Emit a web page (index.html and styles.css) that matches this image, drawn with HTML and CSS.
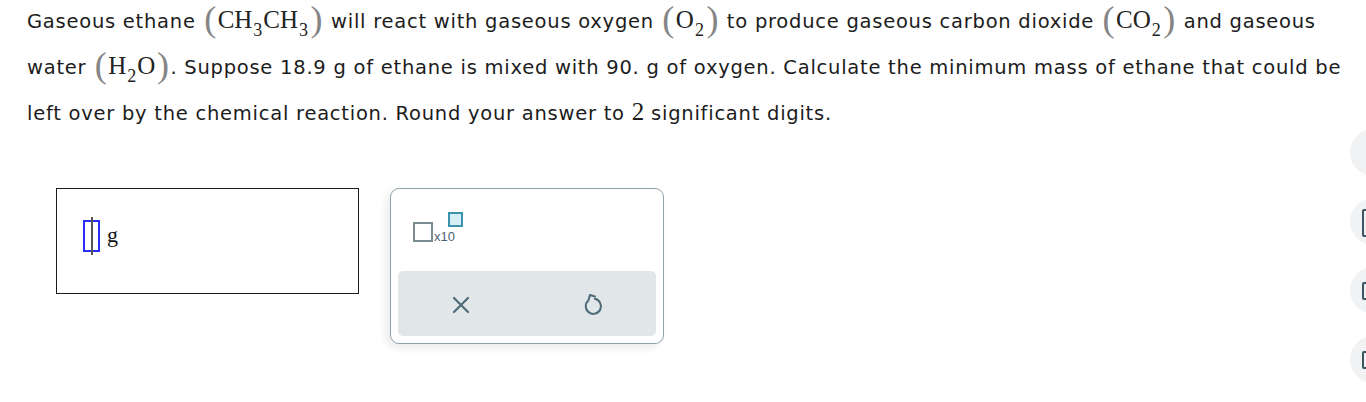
FILE: index.html
```html
<!DOCTYPE html>
<html>
<head>
<meta charset="utf-8">
<link rel="stylesheet" href="styles.css">
</head>
<body>
<div class="page">
  <p class="question">Gaseous ethane <span class="m"><span class="par">(</span>CH<sub>3</sub>CH<sub>3</sub><span class="par">)</span></span> will react with gaseous oxygen <span class="m"><span class="par">(</span>O<sub>2</sub><span class="par">)</span></span> to produce gaseous carbon dioxide <span class="m"><span class="par">(</span>CO<sub>2</sub><span class="par">)</span></span> and gaseous water <span class="m"><span class="par">(</span>H<sub>2</sub>O<span class="par">)</span></span>. Suppose 18.9 g of ethane is mixed with 90. g of oxygen. Calculate the minimum mass of ethane that could be left over by the chemical reaction. Round your answer to <span class="num">2</span> significant digits.</p>

  <div class="answer-row">
    <div class="answer-box">
      <span class="slot"><span class="beam"></span></span>
      <span class="unit">g</span>
    </div>
    <div class="panel">
      <div class="sci">
        <span class="sq"></span><span class="x10">x10</span><span class="exp"></span>
      </div>
      <div class="actions">
        <svg class="ico" width="20" height="20" viewBox="0 0 20 20"><path d="M3 3 L17 17 M17 3 L3 17" stroke="#4f6b78" stroke-width="2.2" fill="none" stroke-linecap="round"/></svg>
        <svg class="ico" width="22" height="24" viewBox="0 0 22 24"><path d="M13 3.5 L8 2 L6.3 7.6 A7.6 7.6 0 1 0 12.8 5.8" stroke="#4f6b78" stroke-width="2" fill="none" stroke-linecap="round" stroke-linejoin="round"/></svg>
      </div>
    </div>
  </div>
</div>
<div class="side">
  <div class="circ"></div>
  <div class="circ"><span class="br tall"></span></div>
  <div class="circ"><span class="br"></span></div>
  <div class="circ"><span class="br"></span></div>
</div>
</body>
</html>
```

FILE: styles.css
```css
html, body { margin: 0; padding: 0; background: #fff; overflow: hidden; }
body { width: 1366px; height: 402px; position: relative; }
.page { padding: 0 0 0 27px; }
.question {
  margin: -2px 0 0 0;
  font-family: "DejaVu Sans", Verdana, sans-serif;
  font-size: 19.5px;
  letter-spacing: 0.75px;
  line-height: 44px;
  color: #1c1c1c;
  width: 1334px;
}
.m {
  font-family: "Liberation Serif", "Times New Roman", serif;
  font-size: 25px;
  letter-spacing: 0;
  color: #222;
}
.m sub { font-size: 18px; vertical-align: -8px; line-height: 0; margin: 0 1px 0 1px; }
.par { font-size: 36px; color: #858585; vertical-align: -3px; line-height: 0; margin: 0 1.5px; }
.num { font-family: "Liberation Serif", serif; font-size: 25px; letter-spacing: 0; }
.answer-row { display: flex; align-items: flex-start; gap: 31px; margin-top: 52px; padding-left: 29px; }
.answer-box {
  width: 303px; height: 106px; border: 1px solid #1a1a1a;
  display: flex; align-items: center; padding-left: 26px; box-sizing: border-box; gap: 7px;
}
.slot {
  width: 17px; height: 32px; border: 2px solid #2a2ef5; position: relative; margin-top: -10px; box-sizing: border-box;
}
.beam { position: absolute; left: 5.5px; top: -5px; width: 2px; height: 38px; background: #555; }
.unit { font-family: "Liberation Serif", serif; font-size: 22px; color: #111; margin-top: -12px; }
.panel {
  width: 274px; height: 156px; box-sizing: border-box;
  border: 1px solid #8fa0a8; border-radius: 9px;
  box-shadow: -4px 4px 8px rgba(0,0,0,0.08);
  padding: 0 7px 7px 7px;
  display: flex; flex-direction: column; justify-content: space-between;
}
.sci { display: flex; align-items: flex-end; padding: 0 0 0 15px; height: 53px; box-sizing: border-box; position: relative; }
.sq { width: 20px; height: 20px; border: 2.5px solid #7b8c94; box-sizing: border-box; background: #fff; }
.x10 { font-family: "Liberation Sans", Arial, sans-serif; font-size: 13px; color: #4f6470; margin-left: 1px; line-height: 13px; margin-bottom: -1px; }
.exp { position: absolute; left: 50px; top: 23px; width: 15px; height: 15px; border: 2px solid #3993ad; background: #d5eef5; box-sizing: border-box; }
.actions {
  height: 65px; background: #e1e6e9; border-radius: 5px;
  display: flex; align-items: center; padding-left: 53px; gap: 111px;
}
.ico { display: block; margin-top: 2px; }
.side { position: absolute; left: 1350px; top: 129px; display: flex; flex-direction: column; gap: 22px; }
.circ { width: 47px; height: 47px; border-radius: 50%; background: #f1f2f4; position: relative; }
.br { position: absolute; left: 12px; top: 15px; width: 12px; height: 18px; border: 2px solid #3d5560; border-radius: 2px; box-sizing: border-box; }
.br.tall { top: 11px; height: 28px; }
```
